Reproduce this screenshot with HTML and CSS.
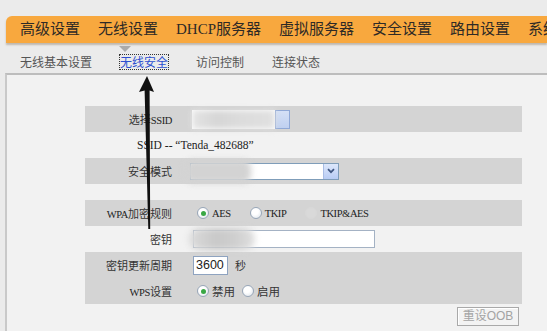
FILE: index.html
```html
<!DOCTYPE html>
<html lang="zh-CN">
<head>
<meta charset="utf-8">
<title>无线安全</title>
<link rel="stylesheet" href="styles.css">
</head>
<body>
<div class="page">
  <nav class="nav">
    <span class="nav-item">高级设置</span>
    <span class="nav-item active">无线设置</span>
    <span class="nav-item">DHCP服务器</span>
    <span class="nav-item">虚拟服务器</span>
    <span class="nav-item">安全设置</span>
    <span class="nav-item">路由设置</span>
    <span class="nav-item">系统工具</span>
  </nav>
  <div class="subnav">
    <span class="sub">无线基本设置</span>
    <span class="sub active">无线安全</span>
    <span class="sub">访问控制</span>
    <span class="sub">连接状态</span>
  </div>
  <main class="panel">
    <div class="form">
      <div class="row shade">
        <div class="label">选择<span class="lat">SSID</span></div>
        <div class="value">
          <div class="ssid-box"><div class="smudge ssid-smudge"></div><div class="mini-drop"></div></div>
        </div>
      </div>
      <div class="row single">
        <div class="ssid-text lat">SSID -- “Tenda_482688”</div>
      </div>
      <div class="row shade">
        <div class="label">安全模式</div>
        <div class="value">
          <div class="sel">
            <div class="smudge sel-smudge"></div>
            <div class="sel-fill"></div>
            <div class="drop"><svg width="8" height="6" viewBox="0 0 8 6"><path d="M1 1.2 L4 4.2 L7 1.2" fill="none" stroke="#3f5680" stroke-width="1.7"/></svg></div>
          </div>
        </div>
      </div>
      <div class="spacer"></div>
      <div class="row shade">
        <div class="label"><span class="lat">WPA</span>加密规则</div>
        <div class="value opts wpa">
          <span class="opt"><span class="radio on"></span><span class="lat">AES</span></span>
          <span class="opt"><span class="radio"></span><span class="lat">TKIP</span></span>
          <span class="opt"><span class="radio faint"></span><span class="lat">TKIP&amp;AES</span></span>
        </div>
      </div>
      <div class="row">
        <div class="label">密钥</div>
        <div class="value">
          <div class="keyin"><div class="smudge key-smudge"></div></div>
        </div>
      </div>
      <div class="row shade">
        <div class="label">密钥更新周期</div>
        <div class="value period">
          <div class="num">3600</div><span class="unit">秒</span>
        </div>
      </div>
      <div class="row shade">
        <div class="label"><span class="lat">WPS</span>设置</div>
        <div class="value opts wps">
          <span class="opt"><span class="radio on"></span><span>禁用</span></span>
          <span class="opt"><span class="radio"></span><span>启用</span></span>
        </div>
      </div>
      <div class="actions">
        <button class="btn" type="button" disabled>重设OOB</button>
      </div>
    </div>
  </main>
</div>
<svg class="arrow" width="547" height="331" viewBox="0 0 547 331">
  <polygon points="147,76 139,92 144.6,90.5 148.3,229 150.2,229 149.6,90.5 154,92" fill="#111"/>
</svg>
</body>
</html>
```
FILE: styles.css
```css
* { box-sizing: border-box; }
html, body { margin: 0; padding: 0; }
body {
  background: #ebebeb;
  width: 547px;
  height: 331px;
  overflow: hidden;
  position: relative;
  font-family: "Noto Sans CJK SC", sans-serif;
}
.page { padding-top: 16px; }

.nav {
  margin-left: 6px;
  height: 27px;
  background: #f8a83e;
  border-top-left-radius: 6px;
  display: flex;
  gap: 18px;
  padding-left: 14px;
  white-space: nowrap;
  box-shadow: 0 2px 2px rgba(110, 90, 60, 0.35);
  position: relative;
}
.nav-item {
  flex: none;
  font-family: "Liberation Serif", "Noto Sans CJK SC", serif;
  font-size: 15px;
  line-height: 27px;
  color: #2e2a26;
  position: relative;
}
.nav-item.active::after {
  content: "";
  position: absolute;
  left: 21px;
  top: 30px;
  border-left: 6px solid transparent;
  border-right: 6px solid transparent;
  border-top: 6px solid #ababab;
}

.subnav {
  height: 30px;
  padding-top: 8px;
  padding-left: 20px;
  display: flex;
  align-items: center;
  gap: 28px;
  font-size: 12px;
  color: #555;
}
.sub { line-height: 14px; }
.sub.active {
  color: #2d4fd0;
  outline: 1px dotted #333;
}

.panel {
  margin-left: 5px;
  border-left: 2px solid #c9c9c9;
  border-top: 2px solid #bdbdbd;
  background: #f2f2f2;
  height: 260px;
  padding-top: 31px;
}
.form { margin-left: 78px; width: 437px; }

.row {
  display: grid;
  grid-template-columns: 87px 1fr;
  column-gap: 18px;
  height: 26px;
  align-items: center;
  font-family: "Noto Sans CJK SC", sans-serif;
  font-size: 11px;
  color: #333;
}
.row.single { display: flex; }
.shade { background: #d4d4d4; }
.label { text-align: right; white-space: nowrap; }
.value { display: flex; align-items: center; }
.spacer { height: 16px; }

.lat {
  font-family: "Liberation Serif", serif;
  font-size: 10.5px;
  letter-spacing: -0.4px;
  color: #222;
}
.ssid-text { padding-left: 52px; font-size: 11.5px; letter-spacing: 0; white-space: nowrap; }

.smudge { filter: blur(3px); }

.ssid-box {
  margin-left: 2px;
  width: 98px;
  height: 19px;
  display: flex;
  background: #fff;
}
.ssid-smudge {
  flex: 1;
  background: linear-gradient(90deg, #e4e4e4, #d6d6d6 30%, #dcdcdc 60%, #e0e0e0);
}
.mini-drop {
  width: 15px;
  background: linear-gradient(#d4e0f6, #bfd0f0);
  border: 1px solid #8fa8d6;
}

.sel {
  width: 149px;
  height: 17px;
  border: 1px solid #7f9db9;
  background: #fff;
  display: flex;
}
.sel-smudge {
  width: 66px;
  margin: -4px 0 -4px -6px;
  border-radius: 8px;
  background: #d3d3d3;
}
.sel-fill { flex: 1; }
.drop {
  width: 15px;
  background: linear-gradient(#dde7fb, #b8ccf4);
  border-left: 1px solid #a9bde5;
  display: flex;
  align-items: center;
  justify-content: center;
}

.opts { padding-left: 7px; }
.opt { display: flex; align-items: center; gap: 3px; }
.wpa { gap: 19px; }
.wps { gap: 7px; font-size: 11.5px; }
.radio {
  width: 12px;
  height: 12px;
  border-radius: 50%;
  border: 1px solid #98a6b8;
  background: radial-gradient(circle at 40% 35%, #ffffff 0, #ffffff 35%, #d9e0e8 100%);
  display: inline-flex;
  align-items: center;
  justify-content: center;
  flex: none;
}
.radio.on::after {
  content: "";
  width: 5px;
  height: 5px;
  border-radius: 50%;
  background: #3aa845;
}
.radio.faint { border-color: #d8d8d8; background: #d9d9d9; }

.keyin {
  margin-left: 3px;
  width: 182px;
  height: 18px;
  border: 1px solid #a4b2c4;
  background: #fff;
  display: flex;
}
.key-smudge {
  width: 66px;
  margin: -3px 0 -3px -5px;
  border-radius: 10px;
  background: linear-gradient(90deg, #dcdcdc, #c9c9c9 40%, #cfcfcf 70%, #e0e0e0);
}

.num {
  margin-left: 3px;
  width: 35px;
  height: 19px;
  border: 1px solid #8ea3c0;
  background: #fff;
  font-family: "Liberation Sans", sans-serif;
  font-size: 12.5px;
  line-height: 17px;
  padding-left: 2px;
  color: #222;
}
.unit { margin-left: 7px; }

.actions {
  display: flex;
  justify-content: flex-end;
  padding-right: 3px;
  margin-top: 3px;
}
.btn {
  width: 62px;
  height: 19px;
  padding: 0;
  border: 1px solid #a9a9a9;
  box-shadow: inset 1px 1px 0 #fff;
  background: #f3f3f3;
  color: #a3a3a3;
  font-family: "Liberation Sans", "Noto Sans CJK SC", sans-serif;
  font-size: 12px;
  line-height: 17px;
}

.arrow {
  position: absolute;
  left: 0;
  top: 0;
  pointer-events: none;
}
```
